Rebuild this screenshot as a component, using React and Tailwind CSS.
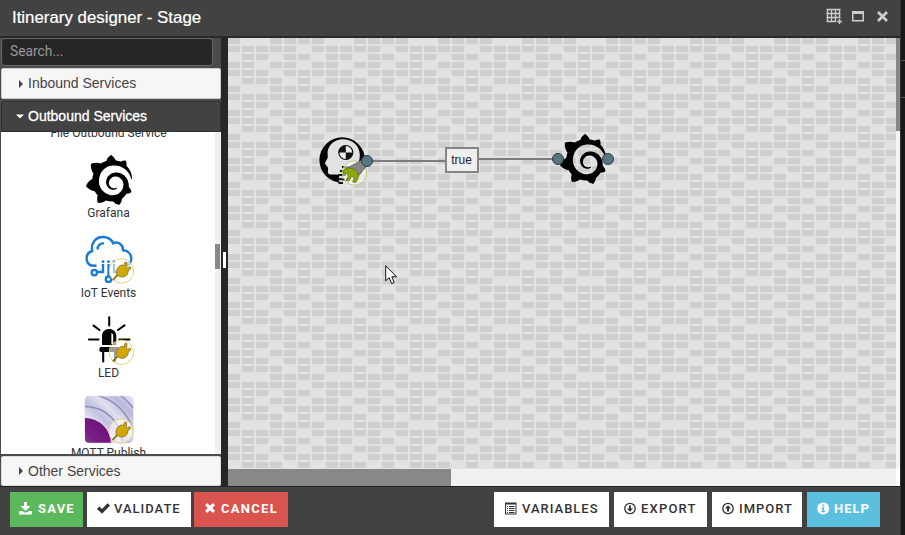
import React from "react";
import { SiGrafana } from "react-icons/si";

// Occupied columns for each of the six repeating brick rows
const BRICKS = [
  [0, 3, 4, 5],
  [0, 1, 2, 3, 4],
  [1, 2, 4, 5],
  [0, 1, 3, 4],
  [0, 1, 2, 4, 5],
  [1, 2, 3, 5],
];

function BrickBackground() {
  return (
    <svg className="block h-full w-full" shapeRendering="crispEdges">
      <defs>
        <pattern id="bricks" width="84" height="48" patternUnits="userSpaceOnUse">
          <rect width="84" height="48" fill="#e2e2e2" />
          {BRICKS.map((cols, r) =>
            cols.map((c) => (
              <rect key={`${r}-${c}`} x={c * 14} y={r * 8} width="12" height="6" fill="#cfcfcf" />
            ))
          )}
        </pattern>
      </defs>
      <rect width="100%" height="100%" fill="url(#bricks)" />
    </svg>
  );
}

function PlugBadge({ cx, cy }) {
  return (
    <g transform={`translate(${cx} ${cy})`}>
      <circle r="12.2" fill="#fff" fillOpacity="0.6" stroke="#e6cd72" strokeWidth="0.9" />
      <path d="M-8.500 9.200L-3.4 3.4" stroke="#8f7a2a" strokeWidth="2" />
      <path
        d="M-4.600 3.400C-5.600 0-4.400-3.600-1-5.400L.8-6.200 2.600-5.200 3.400-8.800 5.600-8.600 5.200-4.200 6-2.600 8.600-4.400 9.600-2.600 6.800-.2C7 3 4.600 5.600 1.600 6-.8 6.200-2.400 5-3.800 4.600Z"
        fill="#d3a703"
        stroke="#92772a"
        strokeWidth="0.9"
      />
    </g>
  );
}

function IotIcon() {
  return (
    <svg width="50" height="50" viewBox="0 0 50 50" className="block">
      <g fill="none" stroke="#187bd8" strokeWidth="2.4">
        <path d="M12.5 30.8H9.5C5 30.8 2.6 27.4 2.6 23.6C2.6 19.6 5 16.8 8.2 16C6.6 8 11.8 2 18.8 2C24 2 27.6 4.6 29.2 8.3C34.3 6 39 9.7 39 15.2C44 15.4 47.3 19 47.3 23.5C47.3 27 45.5 29.6 42.500 30.6" />
        <path d="M13.800 14.500C13.200 10.500 16 8 20 8.400" />
        <path d="M19 29V37H13.300M24.500 29V41M30 29V37H37" />
        <circle cx="10.300" cy="37.600" r="2.700" />
        <circle cx="24.500" cy="44.200" r="2.700" />
      </g>
      <g fill="#187bd8">
        <circle cx="19" cy="26.700" r="1.400" />
        <circle cx="24.500" cy="26.700" r="1.400" />
        <circle cx="30" cy="26.700" r="1.400" />
      </g>
      <PlugBadge cx={37.4} cy={36} />
    </svg>
  );
}

function LedIcon() {
  return (
    <svg width="50" height="50" viewBox="0 0 50 50" className="block">
      <g stroke="#050505" strokeWidth="2.1" strokeLinecap="round" fill="none">
        <path d="M25.200 2.200V10.500M9.600 10.600L15.500 15M40.500 10.400L34 15M5 24.500H14.500M35.500 24.500H45.500M19.200 36V46.500M31 36V46" />
      </g>
      <path d="M18 30V21C18 11.500 32.300 11.500 32.300 21V30Z" fill="#050505" />
      <path d="M27.400 18L29.200 19.500V29H27.400Z" fill="#fff" />
      <rect x="15.400" y="32" width="20" height="5" rx="1.800" fill="#050505" />
      <PlugBadge cx={37.4} cy={37.3} />
    </svg>
  );
}

function MqttIcon() {
  return (
    <svg width="50" height="50" viewBox="0 0 50 50" className="block">
      <defs>
        <linearGradient id="mqBack" x1="0" y1="1" x2="1" y2="0">
          <stop offset="0.250" stopColor="#ececf7" />
          <stop offset="0.450" stopColor="#c0c0e0" />
          <stop offset="0.620" stopColor="#e0e0f0" />
          <stop offset="0.800" stopColor="#b8b8dc" />
          <stop offset="1" stopColor="#ececf8" />
        </linearGradient>
        <linearGradient id="mqCore" x1="0" y1="1" x2="1" y2="0">
          <stop offset="0" stopColor="#b590c0" />
          <stop offset="0.650" stopColor="#761c82" />
          <stop offset="1" stopColor="#681075" />
        </linearGradient>
        <clipPath id="mqClip">
          <rect x="1" y="1.300" width="48" height="46.500" rx="4" />
        </clipPath>
      </defs>
      <rect x="0.500" y="0.800" width="49" height="47.500" rx="5" fill="#e5d8ec" />
      <g clipPath="url(#mqClip)">
        <rect x="1" y="1" width="48" height="47" fill="url(#mqBack)" />
        <g fill="none" stroke="#8c8cbc" strokeWidth="1.400">
          <circle cx="1" cy="49" r="37.500" />
          <circle cx="1" cy="49" r="50" />
          <circle cx="1" cy="49" r="60" />
        </g>
        <circle cx="1" cy="49" r="26.500" fill="url(#mqCore)" stroke="#e8e0f2" strokeWidth="1" />
      </g>
      <PlugBadge cx={37} cy={36} />
    </svg>
  );
}

function HeadNode() {
  return (
    <svg width="52" height="52" viewBox="317 135 52 52" className="block">
      <circle cx="342.200" cy="160" r="22.800" fill="#050505" />
      <path
        d="M327.500 152C329 144.500 334.500 139.500 342.500 139.300C352.500 139.200 359.800 146 359.800 155C359.800 163 356.500 166 355 171L353 183L341 184.500L338.500 180L339.500 175.500C337.500 173.500 331.500 175.500 329 174C327 172.500 328.500 170 328 167.500L324.800 163.500L327.800 157.500Z"
        fill="#e2e2e2"
      />
      <circle cx="345.800" cy="152.500" r="7" fill="#ececec" stroke="#111" strokeWidth="1.200" />
      <path d="M345.800 152.500V145.500A7 7 0 0 1 352.800 152.500ZM345.800 152.500H338.800A7 7 0 0 0 345.800 159.500Z" fill="#111" transform="rotate(-90 345.800 152.500)" />
      <path d="M342 167L350 167.500M340 171L348 171.500M338 175H346M337.500 179L345 179.500M338.500 183L343 183" stroke="#151515" strokeWidth="1.900" />
      <circle cx="354.500" cy="173" r="12.200" fill="#fff" fillOpacity="0.550" stroke="#b7ca6d" strokeWidth="0.900" />
      <path d="M344.500 169.500L362 160L367.500 165L357.500 177Z" fill="#858585" stroke="#5d5d5d" strokeWidth="0.800" />
      <path
        d="M344 169.500C348 167 354 168 356.800 171.500C359.500 175 358.500 179 355.500 182.500L352.500 181.800L354.500 178L351.800 176L349 181L346 180.500L348.200 176.200L346.800 173.500L343.200 173.800Z"
        fill="#8aa80b"
        stroke="#60760c"
        strokeWidth="0.800"
      />
    </svg>
  );
}

function Port() {
  return (
    <span className="block h-[12px] w-[12px] rounded-full border-[1.5px] border-[#333b3e] bg-[#567681]" />
  );
}

function ServiceItem({ icon, label }) {
  return (
    <div className="flex h-[80px] shrink-0 flex-col items-center">
      <div className="flex h-[50px] w-[50px] items-center justify-center">{icon}</div>
      <span className="whitespace-nowrap font-[Roboto] text-[12px] leading-[16px] text-[#333]">{label}</span>
    </div>
  );
}

const GLYPHS = {
  save: <path d="M5 0H8V4H11.500L6.500 9 1.500 4H5ZM0 9H3.500L5 10.500H8L9.500 9H13V12.500H0Z" />,
  check: <path d="M0 7L2.400 4.600 5 7 10.600 1.200 13 3.600 5 11.700Z" />,
  cross: <path d="M1 3.200L3.200 1 6 3.800 8.800 1 11 3.200 8.200 6 11 8.800 8.800 11 6 8.200 3.200 11 1 8.800 3.800 6Z" />,
  list: (
    <path fillRule="evenodd" d="M0 .5H11.500V12.500H0ZM1 2.500V11.500H10.500V2.500ZM2 4H3V5H2ZM4 4H9.500V5H4ZM2 6H3V7H2ZM4 6H9.500V7H4ZM2 8H3V9H2ZM4 8H9.500V9H4ZM2 10H3V11H2ZM4 10H9.500V11H4Z" />
  ),
  down: (
    <g>
      <circle cx="6" cy="6.500" r="5.200" fill="none" stroke="currentColor" strokeWidth="1.300" />
      <path d="M5 3.500H7V6.500H9L6 9.700 3 6.500H5Z" />
    </g>
  ),
  up: (
    <g>
      <circle cx="6" cy="6.500" r="5.200" fill="none" stroke="currentColor" strokeWidth="1.300" />
      <path d="M5 9.500H7V6.500H9L6 3.300 3 6.500H5Z" />
    </g>
  ),
  info: (
    <g>
      <circle cx="6.200" cy="6.500" r="6" />
      <path d="M5.200 2.500H7.200V4.300H5.200ZM4.400 5.300H7.200V9H8.100V10.200H4.400V9H5.200V6.400H4.400Z" fill="#5bc0de" />
    </g>
  ),
};

function ActionButton({ glyph, label, className }) {
  return (
    <button
      className={`flex h-[35px] items-center whitespace-nowrap pb-[2px] font-[Roboto] text-[13px] leading-none ${className}`}
    >
      <svg width="13" height="13" viewBox="0 0 13 13" fill="currentColor" className="mr-[4px] shrink-0">
        {GLYPHS[glyph]}
      </svg>
      {label}
    </button>
  );
}

function SectionHeader({ label, open, className }) {
  return (
    <div className={`flex shrink-0 items-center text-[14px] ${className}`}>
      <svg width="8" height="8" viewBox="0 0 8 8" fill="currentColor" className="mr-[4px]">
        {open ? <path d="M0 1.500H8L4 5.500Z" /> : <path d="M3 0L7 4 3 8Z" />}
      </svg>
      {label}
    </div>
  );
}

function TitleBar() {
  return (
    <header className="flex h-[38px] shrink-0 items-center justify-between border-b-2 border-[#292929] bg-[#424242] pb-[2px] pl-[12px] pr-[12px] text-[#fff]">
      <h1 className="pt-[2px] text-[16.85px] leading-none [-webkit-text-stroke:0.2px_white]">Itinerary designer - Stage</h1>
      <div className="flex items-center pb-[2px] text-[#ccc]">
        <svg width="17" height="16" viewBox="0 0 17 16" fill="none" stroke="currentColor" className="mr-[9px]">
          <path d="M0.500 1.500H14.500M0.500 5.500H14.500M0.500 9.500H14.500M0.500 13.500H10M1.500 1V14M5.500 1V14M9.500 1V14M13.500 1V10" strokeWidth="1.400" />
          <path d="M13.500 11V16M11 13.500H16" strokeWidth="1.400" />
        </svg>
        <svg width="12" height="11" viewBox="0 0 12 11" fill="none" stroke="currentColor" className="mr-[13px]">
          <path d="M.75 1.500H11.250" strokeWidth="3" />
          <rect x="0.750" y="0.750" width="10.500" height="9" strokeWidth="1.500" />
        </svg>
        <svg width="11" height="11" viewBox="0 0 11 11" stroke="currentColor">
          <path d="M1 1L10 10M10 1L1 10" strokeWidth="2.800" />
        </svg>
      </div>
    </header>
  );
}

function Sidebar() {
  return (
    <aside className="flex w-[221px] shrink-0 flex-col bg-[#4b4b4b] pl-px">
      <input
        placeholder="Search..."
        className="h-[28px] w-[212px] shrink-0 rounded-[4px] border border-[#666] bg-[#262626] px-[8px] pb-[2px] font-[Roboto] text-[13.8px] placeholder:text-[#999]"
      />
      <SectionHeader label="Inbound Services" className="mt-[2px] h-[31px] rounded-[2px] border border-[#ccc] bg-[#f6f6f6] pl-[14px] text-[#444]" />
      <SectionHeader open label="Outbound Services" className="mt-[2px] h-[31px] rounded-t-[3px] border border-[#303030] bg-[#424242] pl-[14px] text-white [-webkit-text-stroke:0.3px_white]" />
      <div className="flex h-[322px] shrink-0 bg-white">
        <div className="flex flex-1 flex-col overflow-hidden pl-px">
          <span className="-mt-[7px] mb-[14px] text-center font-[Roboto] text-[12px] leading-[16px] text-[#333]">
            File Outbound Service
          </span>
          <ServiceItem icon={<SiGrafana size={50} color="#000" />} label="Grafana" />
          <ServiceItem icon={<IotIcon />} label="IoT Events" />
          <ServiceItem icon={<LedIcon />} label="LED" />
          <ServiceItem icon={<MqttIcon />} label="MQTT Publish" />
        </div>
        <div className="w-[6px] bg-[#f0f0f0] pt-[112px]">
          <div className="h-[25px] w-[5px] bg-[#888]" />
        </div>
      </div>
      <SectionHeader label="Other Services" className="mt-[2px] h-[30px] rounded-[2px] border border-[#ddd] bg-[#f6f6f6] pl-[14px] text-[#444]" />
    </aside>
  );
}

function Canvas() {
  return (
    <main className="flex flex-1 flex-col bg-white">
      <div className="flex h-[431px]">
        <div className="relative w-[668px] overflow-hidden">
          <BrickBackground />
          <div className="absolute left-[139px] top-[122px] h-[2px] w-[80px] bg-[#7d7d7d]" />
          <div className="absolute left-[250px] top-[120px] h-[2px] w-[80px] bg-[#7d7d7d]" />
          <div className="absolute left-[217px] top-[109px] flex h-[26px] w-[34px] items-center justify-center border-2 border-[#858585] bg-[#efefef] pr-px text-[12px] text-[#222]">
            true
          </div>
          <div className="absolute left-[89px] top-[97px]"><HeadNode /></div>
          <div className="absolute left-[330px] top-[96px]"><SiGrafana size={50} color="#000" /></div>
          <div className="absolute left-[133px] top-[117px]"><Port /></div>
          <div className="absolute left-[324px] top-[115px]"><Port /></div>
          <div className="absolute left-[374px] top-[115px]"><Port /></div>
          <svg className="absolute left-[157px] top-[227px]" width="14" height="21" viewBox="0 0 14 21">
            <path d="M.7.800V15.800L4.200 12.700 6.700 18.700 9.300 17.600 6.900 11.800H11.500Z" fill="#fff" stroke="#111" strokeWidth="1" />
          </svg>
        </div>
        <div className="w-[4px] bg-[#f4f4f4]">
          <div className="h-[93px] bg-[#888]" />
        </div>
      </div>
      <div className="h-[17px] w-[668px] bg-[#f0f0f0]">
        <div className="h-full w-[223px] bg-[#888]" />
      </div>
    </main>
  );
}

function Footer() {
  return (
    <footer className="flex h-[49px] shrink-0 justify-between border-t border-[#222] bg-[#424242] pl-[10px] pr-[20px] pt-[5px] tracking-[1px]">
      <div className="flex">
        <ActionButton glyph="save" label="SAVE" className="mr-[4px] w-[73px] gap-[2px] bg-[#5cb85c] pl-[9px] font-bold tracking-[1.2px] text-white" />
        <ActionButton glyph="check" label="VALIDATE" className="mr-[3px] w-[104px] bg-white pl-[10px] font-medium text-[#333]" />
        <ActionButton glyph="cross" label="CANCEL" className="w-[94px] bg-[#d9534f] pl-[10px] font-bold tracking-[1.3px] text-white" />
      </div>
      <div className="flex gap-[5px]">
        <ActionButton glyph="list" label="VARIABLES" className="w-[115px] bg-white pl-[11px] font-medium text-[#333]" />
        <ActionButton glyph="down" label="EXPORT" className="w-[93px] bg-white pl-[10px] font-medium tracking-[1.2px] text-[#333]" />
        <ActionButton glyph="up" label="IMPORT" className="w-[90px] bg-white pl-[10px] font-medium text-[#333]" />
        <ActionButton glyph="info" label="HELP" className="w-[73px] bg-[#5bc0de] pl-[10px] font-bold text-white" />
      </div>
    </footer>
  );
}

export default function App() {
  return (
    <div className="flex h-[535px] w-[905px] overflow-hidden bg-[#181818] font-['Liberation_Sans',Arial,sans-serif]">
      <div className="flex w-[900px] flex-col bg-[#262626]">
        <TitleBar />
        <div className="flex h-[448px]">
          <Sidebar />
          <div className="flex w-[7px] shrink-0 items-start justify-center bg-[#262626] pt-[214px]">
            <div className="h-[16px] w-[3px] bg-white" />
          </div>
          <Canvas />
        </div>
        <Footer />
      </div>
      <div className="flex w-[5px] flex-col border-l border-[#333] pt-[60px]">
        <div className="mb-[36px] h-px bg-[#555]" />
        <div className="h-px bg-[#555]" />
      </div>
    </div>
  );
}
